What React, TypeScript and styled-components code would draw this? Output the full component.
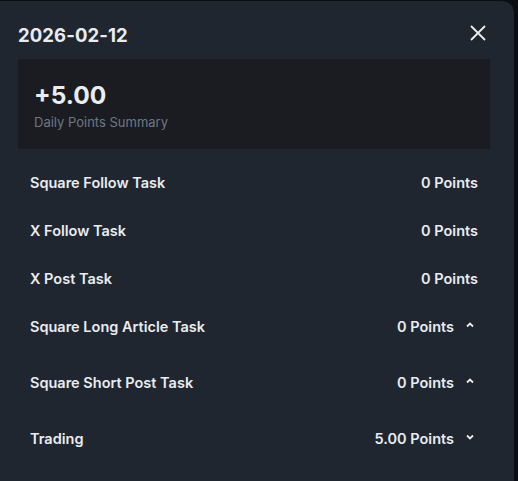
import React from "react";
import styled, { createGlobalStyle } from "styled-components";

const GlobalStyle = createGlobalStyle`
  html, body {
    margin: 0;
    padding: 0;
    background: #0c0e12;
    font-family: Inter, "Noto Sans", "Liberation Sans", sans-serif;
    overflow: hidden;
  }
`;

interface TaskRow {
  name: string;
  points: string;
  chevron?: "up" | "down";
}

const rows: TaskRow[] = [
  { name: "Square Follow Task", points: "0 Points" },
  { name: "X Follow Task", points: "0 Points" },
  { name: "X Post Task", points: "0 Points" },
  { name: "Square Long Article Task", points: "0 Points", chevron: "up" },
  { name: "Square Short Post Task", points: "0 Points", chevron: "up" },
  { name: "Trading", points: "5.00 Points", chevron: "down" },
];

const Panel = styled.div`
  margin-top: 1px;
  width: 514px;
  height: 480px;
  box-sizing: border-box;
  background: #1f2630;
  border-radius: 0 12px 0 0;
  padding: 19px 24px 0 18px;
  color: #eaecef;
`;

const Header = styled.div`
  display: flex;
  align-items: center;
  justify-content: space-between;
  height: 30px;
  margin-bottom: 9px;
`;

const Title = styled.div`
  font-size: 18.5px;
  font-weight: 700;
  letter-spacing: 0.1px;
`;

const CloseButton = styled.button`
  display: flex;
  align-items: center;
  justify-content: center;
  width: 24px;
  height: 24px;
  padding: 0;
  margin: -5px 0 0 0;
  border: none;
  background: none;
  color: #eaecef;
  cursor: pointer;
`;

const Summary = styled.div`
  height: 90px;
  box-sizing: border-box;
  background: #1a1c21;
  padding: 21px 16px 0;
  display: flex;
  flex-direction: column;
`;

const Amount = styled.div`
  font-size: 24.5px;
  font-weight: 700;
  line-height: 30px;
`;

const SummaryLabel = styled.div`
  margin-top: 3px;
  font-size: 13px;
  line-height: 18px;
  color: #6e7785;
`;

const List = styled.div`
  margin-top: 9px;
  display: flex;
  flex-direction: column;
`;

const Row = styled.div<{ $expandable?: boolean }>`
  display: flex;
  align-items: center;
  height: 48px;
  padding: 0 12px;
  margin-bottom: ${(p) => (p.$expandable ? "8px" : "0")};
  font-size: 14.5px;
  font-weight: 600;
`;

const Name = styled.div`
  flex: 1;
`;

const Points = styled.div`
  text-align: right;
`;

const Chevron = styled.div`
  display: flex;
  align-items: center;
  justify-content: center;
  width: 16px;
  height: 16px;
  margin-left: 8px;
  margin-top: -3px;
`;

const CloseIcon = () => (
  <svg width="16" height="16" viewBox="0 0 16 16" fill="none">
    <path d="M1 1L15 15M15 1L1 15" stroke="currentColor" strokeWidth="1.8" />
  </svg>
);

const ChevronIcon = ({ dir }: { dir: "up" | "down" }) => (
  <svg width="8" height="6" viewBox="0 0 8 6" fill="none">
    {dir === "up" ? (
      <path d="M1 4.5L4 1.5L7 4.5" stroke="#eaecef" strokeWidth="1.8" />
    ) : (
      <path d="M1 1.5L4 4.5L7 1.5" stroke="#eaecef" strokeWidth="1.8" />
    )}
  </svg>
);

export default function App() {
  return (
    <>
      <GlobalStyle />
      <Panel>
        <Header>
          <Title>2026-02-12</Title>
          <CloseButton aria-label="Close">
            <CloseIcon />
          </CloseButton>
        </Header>
        <Summary>
          <Amount>+5.00</Amount>
          <SummaryLabel>Daily Points Summary</SummaryLabel>
        </Summary>
        <List>
          {rows.map((row) => (
            <Row key={row.name} $expandable={!!row.chevron}>
              <Name>{row.name}</Name>
              <Points>{row.points}</Points>
              {row.chevron && (
                <Chevron>
                  <ChevronIcon dir={row.chevron} />
                </Chevron>
              )}
            </Row>
          ))}
        </List>
      </Panel>
    </>
  );
}
